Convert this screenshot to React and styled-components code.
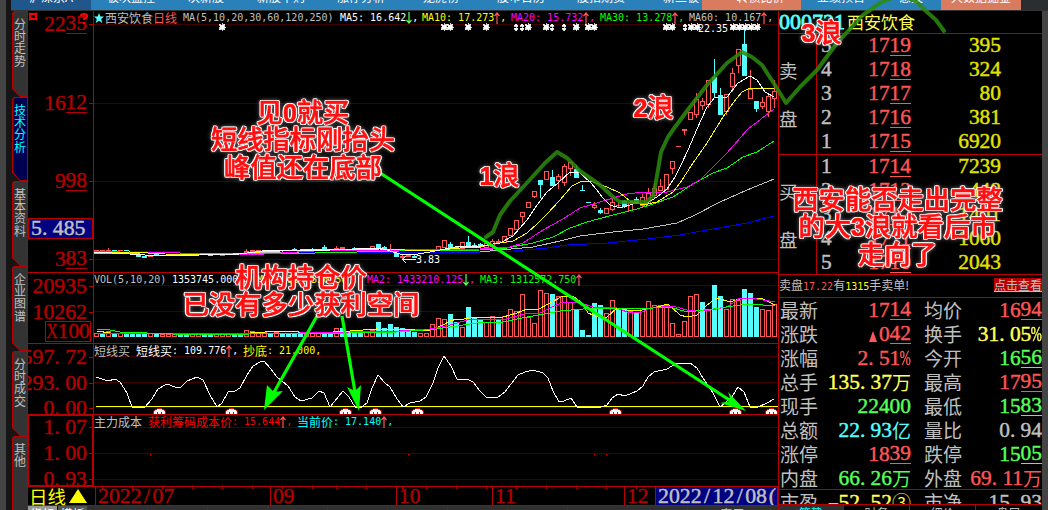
import React from 'react';
import styled, { createGlobalStyle } from 'styled-components';

const RED = '#b80000';
const UP = '#ff5555';
const DOWN = '#55ffff';
const GRID = '#420000';

const GlobalStyle = createGlobalStyle`
  * {
    box-sizing: border-box;
  }
  body {
    margin: 0;
    background: #000;
    overflow: hidden;
  }
`;

const Window = styled.div`
  position: relative;
  display: flex;
  width: 1048px;
  height: 510px;
  overflow: hidden;
  background: #000;
  color: #c0c0c0;
  font-family: 'Liberation Serif', 'Noto Sans CJK SC', serif;
`;

const Edge = styled.div`
  flex: none;
  width: ${(p) => p.$w}px;
  background: ${(p) => p.$bg};
`;

const Content = styled.div`
  display: flex;
  flex-direction: column;
  width: 1037px;
`;

const TopBar = styled.div`
  display: flex;
  height: 11px;
  overflow: hidden;
  background: #2b2d31;
  border-bottom: 1px solid #333;
`;

const TopTab = styled.div`
  flex: none;
  width: ${(p) => p.$w}px;
  padding-left: ${(p) => p.$pad || 0}px;
  height: 10px;
  background: ${(p) => p.$bg || '#2a80b9'};
  color: #fff;
  font: 12px 'Liberation Sans', 'Noto Sans CJK SC', sans-serif;
  line-height: 16px;
  text-align: center;
  white-space: nowrap;

  span {
    display: block;
    margin-top: -10px;
  }
`;

const Body = styled.div`
  display: flex;
  height: 499px;
`;

const Sidebar = styled.div`
  width: 17px;
  padding-left: 1px;
  background: #151515;
`;

const SideTab = styled.div`
  position: relative;
  height: ${(p) => p.$h}px;
  padding: 7px 0 0 2px;
  background: ${RED};
  clip-path: polygon(0 2px, 2px 0, 100% 0, 100% 100%, 8px 100%, 0 calc(100% - 8px));
  color: ${(p) => (p.$active ? '#00ffff' : '#c0c0c0')};
  font: 12px 'Noto Sans CJK SC', sans-serif;
  line-height: 12.2px;
  word-break: break-all;

  &::before {
    content: '';
    position: absolute;
    inset: 1px;
    background: ${(p) => (p.$active ? '#000050' : '#333')};
    clip-path: polygon(0 2px, 2px 0, 100% 0, 100% 100%, 7px 100%, 0 calc(100% - 8px));
  }

  span {
    position: relative;
    display: block;
    width: 12px;
  }
`;

const Main = styled.div`
  display: flex;
  flex-direction: column;
  width: 750px;
`;

const Panel = styled.div`
  display: flex;
  height: ${(p) => p.$h}px;
  border-bottom: 1px solid ${RED};
`;

const Axis = styled.div`
  position: relative;
  width: 66px;
  flex: none;
  overflow: hidden;
  border-right: 1px solid ${RED};
  box-shadow: ${(p) => (p.$boxed ? `inset 0 0 0 1px ${RED}` : 'none')};
`;

const AxisLabel = styled.div`
  display: flex;
  justify-content: flex-end;
  align-items: center;
  height: ${(p) => p.$h || 26}px;
  margin-top: ${(p) => p.$mt || 0}px;
  padding-right: 6px;
  color: #b40000;
  background: linear-gradient(${RED}, ${RED}) no-repeat right 0 top 50% / 4px 1px;
`;

const CursorValue = styled.div`
  display: flex;
  align-items: center;
  height: 21px;
  margin-top: 24px;
  padding-left: 2px;
  border: 1px solid ${RED};
  background: #000080;
  color: #c0c0c0;
`;

const Unit = styled.div`
  display: flex;
  align-items: center;
  width: 46px;
  height: 21px;
  margin: -4px 0 0 17px;
  padding-left: 1px;
  border: 1px solid ${RED};
  color: #b40000;
`;

const AxisIcons = styled.svg`
  position: absolute;
  left: 0;
  top: 0;
`;

const Plot = styled.div`
  position: relative;
  flex: 1;
  overflow: hidden;
`;

const PlotHeader = styled.div`
  position: absolute;
  top: 0;
  left: 0;
  display: flex;
  align-items: center;
  height: 13px;
  font: 10px 'DejaVu Sans Mono', 'Noto Sans CJK SC', monospace;
  line-height: 13px;
  white-space: pre;
`;

const Seg = styled.span`
  display: flex;
  align-items: center;
  flex: none;
  width: ${(p) => p.$w}px;
  color: ${(p) => p.$c || '#c0c0c0'};
`;

const Cn = styled.span`
  font: 12px 'Noto Sans CJK SC', sans-serif;
  line-height: 13px;
`;

const NumBox = styled.span`
  display: inline-flex;
  align-items: center;
  height: 20px;
  line-height: 19px;
  font-size: ${(p) => p.$size || 21.4}px;
  white-space: nowrap;
  -webkit-text-stroke: ${(p) => (p.$bold ? 0.8 : 0.45)}px currentColor;

  u {
    height: 20px;
    text-decoration: none;
    border-bottom: 1px solid currentColor;
  }
  b {
    font: 19px 'Noto Sans CJK SC', sans-serif;
    line-height: 18px;
    -webkit-text-stroke: 0;
  }
`;

const Cell = styled.i`
  display: flex;
  justify-content: ${(p) => (p.$ch === '.' ? 'flex-start' : 'center')};
  width: 0.5em;
  font-style: normal;
  line-height: 19px;
  transform: scaleX(${(p) => ({ '%': 0.62, X: 0.72, '-': 1.6 }[p.$ch] || 1)});
`;

const DateBar = styled.div`
  display: flex;
  height: 19px;
  border-bottom: 1px solid ${RED};
`;

const Period = styled.div`
  display: flex;
  align-items: center;
  width: 68px;
  padding-left: 1px;
  border-right: 1px solid ${RED};
  color: #ffff00;
  font: 18.5px 'Noto Sans CJK SC', sans-serif;
  line-height: 18px;
  white-space: nowrap;
`;

const Month = styled.div`
  display: flex;
  align-items: center;
  flex: none;
  width: ${(p) => p.$w}px;
  padding-left: 2px;
  border-right: 1px solid ${RED};
  overflow: hidden;
  color: ${(p) => (p.$on ? '#c0c0c0' : '#b40000')};
  background: ${(p) => (p.$on ? '#000080' : 'transparent')};
`;

const BottomTabs = styled.div`
  display: flex;
  height: 5px;
  overflow: hidden;
`;

const BottomTab = styled.div`
  flex: none;
  width: ${(p) => p.$w}px;
  border-right: 1px solid ${(p) => p.$line || RED};
  background: ${(p) => p.$bg || '#303030'};
  color: ${(p) => p.$c || '#c0c0c0'};
  font: 12px 'Noto Sans CJK SC', sans-serif;
  line-height: 14px;
  padding-top: 1px;
  text-align: center;
  white-space: nowrap;
`;

const Quotes = styled.div`
  display: flex;
  flex-direction: column;
  width: 264px;
  border-left: 1px solid ${RED};
`;

const QuoteTitle = styled.div`
  display: flex;
  align-items: center;
  height: 23px;
  border-bottom: 1px solid ${RED};
  color: #55ffff;

  strong {
    margin-left: 2px;
    color: #ffff55;
    font: 17px 'Noto Sans CJK SC', sans-serif;
    line-height: 20px;
  }
`;

const Book = styled.div`
  display: flex;
  height: ${(p) => p.$h}px;
  border-bottom: 1px solid ${RED};
`;

const Side = styled.div`
  width: 38px;
  border-right: 1px solid ${RED};
  font: 18.5px 'Noto Sans CJK SC', sans-serif;
  line-height: 24px;
  padding-top: 24px;

  div + div {
    margin-top: 24px;
  }
`;

const Levels = styled.div`
  flex: 1;
`;

const Level = styled.div`
  display: grid;
  grid-template-columns: 14px 76px 90px;
  align-items: center;
  height: 24px;
  padding-left: 4px;

  > span:nth-child(2) {
    justify-content: flex-end;
    color: ${UP};
  }
  > span:nth-child(3) {
    justify-content: flex-end;
    color: #e2e200;
  }
`;

const Notice = styled.div`
  display: flex;
  justify-content: space-between;
  align-items: flex-start;
  height: 24px;
  padding-top: 3px;
  border-bottom: 1px solid ${RED};
  font: 12px 'Noto Sans CJK SC', sans-serif;
  line-height: 14px;

  em {
    font: 10px 'DejaVu Sans Mono', monospace;
    color: ${UP};
  }
  em + em {
    color: #ffff00;
  }
  a {
    background: #b80000;
    text-decoration: underline;
    text-decoration-thickness: 1px;
  }
`;

const StatRow = styled.div`
  display: grid;
  grid-template-columns: 39px 92px 13px 39px 79px;
  align-items: center;
  height: 24px;
  padding-left: 1px;
  font: 19px 'Noto Sans CJK SC', sans-serif;
  line-height: 24px;
`;

const Stat = styled.div`
  display: flex;
  justify-content: flex-end;
  color: ${(p) => p.$c};
  font-family: 'Liberation Serif', 'Noto Sans CJK SC', serif;
`;

const Stats = styled.div`
  height: 192px;
  border-bottom: 1px solid ${RED};
`;

const LastStats = styled.div`
  height: 15px;
  overflow: hidden;
  border-bottom: 1px solid ${RED};
`;

const Marks = styled.svg`
  position: absolute;
  left: 0;
  top: 0;
  pointer-events: none;
`;

const Note = styled.div`
  position: absolute;
  left: ${(p) => p.$x}px;
  top: ${(p) => p.$y}px;
  transform: translateX(-50%);
  color: #ff1010;
  font: 500 26.3px 'Liberation Sans', 'Noto Sans CJK SC', sans-serif;
  line-height: 27.3px;
  text-align: center;
  white-space: nowrap;
  -webkit-text-stroke: 0.6px #ff1010;
  text-shadow: 1.3px 0 #fff, -1.3px 0 #fff, 0 1.3px #fff, 0 -1.3px #fff, 1px 1px #fff, -1px 1px #fff,
    1px -1px #fff, -1px -1px #fff;
  filter: drop-shadow(0 0 2px rgba(190, 190, 190, 0.55));

  b {
    font-weight: 700;
    font-size: 25px;
  }
`;

// every character that is not a digit takes one digit-wide cell
const cells = (text) =>
  text.split(/([^0-9])/).filter(Boolean).map((part, i) => {
    if (/^[0-9]+$/.test(part)) return <span key={i}>{part}</span>;
    if (/[万亿③]/.test(part)) return <b key={i}>{part}</b>;
    return <Cell key={i} $ch={part}>{part}</Cell>;
  });

const Num = ({ v, cents, size, bold }) => (
  <NumBox $size={size} $bold={bold}>
    {cents ? (
      <>
        {v[0] === '▲' && (
          <svg width="8" height="11" style={{ marginRight: 2, marginTop: 4 }}>
            <path d="M4 0L5.5 4L8 11H0L2.5 4Z" fill="currentColor" />
          </svg>
        )}
        <span>{v.replace('▲', '').slice(0, -2)}</span>
        <u>{v.slice(-2)}</u>
      </>
    ) : (
      cells(v)
    )}
  </NumBox>
);

const Arrow = ({ down }) => (
  <svg width="6" height="12" viewBox="0 0 6 12">
    <path
      d={down ? 'M3 0V11M0.5 8L3 11L5.5 8' : 'M3 12V1M0.5 4L3 1L5.5 4'}
      stroke={down ? '#55ff55' : UP}
      strokeWidth="1.2"
      fill="none"
    />
  </svg>
);

const barX = (i) => 94 + i * 6;

// [index, up, body top, body bottom, high, low]
const candles = [
  [0, 1, 250, 251, 250, 251], [1, 1, 250, 251, 250, 251], [2, 1, 250, 251, 248, 251],
  [3, 0, 250, 251, 250, 251], [4, 1, 250, 251, 250, 251], [5, 0, 250, 251, 250, 252],
  [6, 1, 252, 253, 252, 253], [7, 0, 254, 257, 254, 257], [8, 0, 256, 258, 256, 258],
  [9, 1, 255, 257, 255, 257], [10, 0, 254, 255, 254, 255], [12, 1, 254, 255, 254, 255],
  [14, 1, 255, 256, 254, 256], [17, 0, 254, 255, 254, 255], [19, 0, 254, 256, 254, 256],
  [21, 1, 254, 256, 253, 256], [23, 1, 254, 255, 254, 255], [25, 1, 251, 253, 249, 253],
  [26, 1, 250, 252, 250, 252], [27, 1, 250, 252, 250, 252], [29, 0, 250, 252, 250, 252],
  [31, 0, 250, 251, 250, 252], [33, 0, 249, 251, 248, 251], [35, 1, 249, 251, 249, 251],
  [36, 0, 249, 250, 248, 251], [38, 0, 247, 249, 245, 250], [40, 1, 248, 250, 246, 250],
  [41, 1, 247, 249, 247, 249], [43, 0, 248, 250, 247, 250], [45, 0, 249, 251, 249, 251],
  [46, 1, 246, 250, 246, 250], [47, 0, 244, 248, 244, 248], [48, 0, 247, 249, 246, 249],
  [49, 1, 249, 250, 244, 251], [50, 0, 253, 257, 253, 257], [51, 1, 256, 258, 255, 259],
  [52, 1, 255, 257, 254, 257], [53, 0, 256, 258, 255, 258], [56, 1, 250, 252, 250, 252],
  [57, 1, 246, 250, 246, 250], [58, 1, 240, 248, 240, 248], [59, 0, 244, 249, 242, 249],
  [60, 0, 247, 249, 246, 249], [61, 1, 242, 249, 242, 249], [62, 0, 242, 247, 236, 247],
  [63, 0, 245, 247, 243, 247], [64, 0, 244, 247, 243, 248], [65, 1, 243, 248, 243, 248],
  [66, 1, 241, 247, 239, 247], [67, 1, 241, 243, 239, 243], [68, 1, 236, 243, 236, 243],
  [69, 1, 228, 236, 228, 236], [70, 1, 220, 230, 220, 230], [71, 1, 212, 217, 212, 223],
  [72, 1, 202, 208, 202, 208], [73, 1, 191, 197, 191, 198], [74, 0, 180, 185, 180, 198],
  [75, 1, 171, 180, 171, 180], [76, 0, 177, 186, 170, 186], [77, 1, 176, 181, 174, 189],
  [78, 1, 166, 183, 164, 186], [79, 1, 162, 169, 162, 176], [80, 0, 169, 178, 165, 178],
  [81, 0, 190, 191, 185, 191], [82, 0, 202, 203, 202, 203], [83, 1, 205, 208, 202, 209],
  [84, 0, 210, 213, 208, 214], [85, 1, 208, 214, 208, 214], [86, 1, 202, 210, 198, 211],
  [87, 1, 205, 206, 203, 208], [88, 0, 201, 207, 200, 208], [89, 1, 202, 211, 202, 211],
  [90, 0, 199, 204, 197, 204], [91, 1, 197, 206, 194, 207], [92, 1, 193, 204, 188, 204],
  [93, 1, 188, 196, 183, 198], [94, 1, 186, 191, 179, 191], [95, 1, 174, 190, 174, 190],
  [96, 1, 161, 169, 161, 174], [97, 1, 146, 147, 146, 147], [98, 1, 129, 131, 129, 135],
  [99, 1, 112, 120, 112, 120], [100, 1, 99, 115, 93, 118], [101, 1, 101, 106, 98, 110],
  [102, 1, 80, 105, 80, 108], [103, 0, 77, 93, 59, 97], [104, 0, 95, 115, 88, 115],
  [105, 1, 94, 112, 94, 115], [106, 1, 73, 87, 68, 92], [107, 1, 49, 66, 49, 73],
  [108, 0, 44, 76, 28, 76], [109, 1, 89, 99, 70, 99], [110, 0, 101, 109, 101, 112],
  [111, 1, 102, 107, 97, 109], [112, 1, 96, 112, 93, 117], [113, 1, 91, 99, 80, 108],
];

const volumes = [
  4, 4, 6, 4, 4, 4, 4, 4, 4, 4, 4, 3, 3, 3, 4, 3, 3, 3, 3, 4, 3, 3, 4, 4, 4, 7, 6, 5, 5, 4, 5, 4, 4, 4,
  5, 4, 5, 4, 3, 5, 9, 9, 5, 5, 4, 5, 7, 15, 9, 13, 10, 9, 6, 5, 4, 4, 13, 19, 18, 23, 15, 10, 30, 20,
  18, 15, 21, 18, 21, 28, 26, 43, 20, 14, 47, 44, 43, 41, 41, 35, 27, 7, 2, 34, 32, 24, 37, 29, 27, 26,
  25, 29, 36, 32, 32, 32, 14, 3, 16, 41, 43, 35, 27, 52, 41, 28, 38, 37, 48, 44, 30, 28, 27, 33,
];

const fallingVolumes = new Set([
  1, 3, 5, 6, 7, 8, 10, 14, 15, 18, 19, 23, 24, 29, 31, 32, 33, 34, 38, 39, 41, 42, 43, 44, 47, 48, 49,
  50, 51, 52, 53, 59, 60, 62, 63, 64, 67, 76, 80, 81, 82, 83, 84, 87, 88, 90, 101, 103, 104, 108, 109, 110,
]);

const priceLines = [
  ['#0000ff', '94,251 180,252 300,252 400,252 480,252 513,251 547,248 567,245 607,243 647,239 680,235 713,229 747,223 774,216'],
  ['#c0c0c0', '94,253 140,254 200,254 300,252 480,252 500,250 533,247 560,241 580,236 613,232 643,229 677,223 693,216 720,202 747,190 774,179'],
  ['#00ff00', '180,253 315,253 400,251 480,250 507,248 533,243 553,237 570,228 587,222 613,215 637,209 653,204 673,197 693,184 713,173 727,168 743,157 757,152 774,141'],
  ['#ff00ff', '94,251 120,252 160,252 220,255 265,254 330,250 400,250 480,249 510,247 523,243 543,230 563,219 580,208 597,203 613,198 627,194 643,192 667,192 687,187 700,180 713,167 727,153 748,129 774,109'],
  ['#ffff00', '94,253 130,252 165,254 220,255 260,252 300,250 380,249 430,251 460,248 480,247 493,244 513,241 527,233 537,224 547,214 560,200 572,186 582,181 593,182 607,187 620,193 630,201 643,205 657,202 673,192 680,183 693,163 707,143 723,117 733,103 742,92 750,88 762,88 774,89'],
  ['#ffffff', '94,252 130,254 160,256 200,255 240,254 270,250 330,250 380,248 400,254 412,255 430,252 455,247 480,246 500,243 513,236 527,220 535,208 547,192 558,183 570,172 580,173 590,182 597,190 603,198 610,205 620,208 633,204 647,203 657,197 667,189 675,177 682,163 688,150 697,129 707,107 715,97 727,97 738,83 750,76 757,80 765,92 774,97'],
];

const volumeLines = [
  ['#ffff00', '97,331 110,333 160,333 200,335 240,333 250,333 280,331 317,333 350,331 376,329 417,330 430,330 443,325 450,321 457,319 464,319 477,317 490,318 503,317 517,313 527,309 537,310 550,303 563,296 573,296 582,303 588,313 598,317 607,317 617,308 627,310 637,311 657,307 668,304 680,315 687,317 697,315 707,305 717,298 730,302 743,298 763,299 775,305'],
  ['#ff00ff', '97,333 140,333 200,334 300,333 400,331 430,329 450,325 467,320 483,319 503,320 517,316 527,313 540,313 550,308 563,302 577,302 593,307 617,308 627,312 640,313 650,308 673,306 690,311 710,310 727,307 740,298 757,299 775,302'],
  ['#00ff00', '97,329 110,330 120,332 200,335 250,334 350,333 397,332 437,329 450,327 477,323 503,322 527,317 550,313 560,311 583,309 617,308 653,308 670,307 687,312 713,309 733,306 750,304 775,306'],
];

const shortLine =
  '96,377 108,381 115,379 120,382 127,393 132,407 145,407 152,399 158,389 167,384 175,387 181,387 187,381 197,377 203,380 210,395 217,407 222,403 228,392 235,391 240,388 247,375 253,366 260,362 264,361 270,368 277,377 288,386 295,397 301,401 312,398 319,391 324,393 330,407 343,391 349,397 355,407 360,408 367,403 372,388 378,375 385,383 390,387 397,399 403,407 410,403 420,401 426,397 433,383 438,368 444,356 451,366 457,379 467,379 473,382 480,391 487,398 498,397 505,392 511,384 518,375 525,372 533,370 543,373 548,378 553,391 559,402 564,401 571,398 577,407 601,407 607,405 612,398 618,394 625,396 637,391 643,386 648,377 654,372 667,369 677,363 690,363 697,368 703,378 713,393 720,407 732,397 738,387 744,392 750,407 758,407 767,403 774,399';

const starMarks = [222, 444, 450, 468, 486, 528, 546, 576, 588, 594, 666, 672, 691, 697, 733, 739, 745, 751, 757];
const diamondMarks = [516, 522, 552, 564, 685];
const signals = [159, 231, 345, 375, 417, 615, 735, 771];

const Grid = ({ ys }) => ys.map((y) => <path key={y} d={`M93 ${y + 0.5}H778`} stroke={GRID} />);

const Lines = ({ data }) =>
  data.map(([color, points]) => (
    <polyline key={color} points={points} stroke={color} fill="none" shapeRendering="crispEdges" />
  ));

const PriceChart = () => (
  <svg width="684" height="261" viewBox="94 11 684 261" shapeRendering="crispEdges">
    <Grid ys={[24, 103, 181, 259]} />
    {candles.map(([i, up, top, bottom, high, low]) => {
      const x = barX(i);
      const color = up ? UP : DOWN;
      return (
        <g key={i} stroke={color}>
          <path d={`M${x + 2.5} ${high}V${low}`} />
          {bottom - top < 2 ? (
            <path d={`M${x} ${top + 0.5}h5`} />
          ) : (
            <rect x={x + 0.5} y={top + 0.5} width="4" height={bottom - top - 1} fill={up ? '#000' : color} />
          )}
        </g>
      );
    })}
    <Lines data={priceLines} />
    {starMarks.map((x) => (
      <path
        key={x}
        d={`M${x - 3} 24l2 1h2l2 -1l-1 2v2l1 2l-2 -1h-2l-2 1l1 -2v-2zM${x} 23v8M${x - 3.5} 27h7`}
        fill="#fff"
        stroke="#fff"
        strokeWidth="0.8"
      />
    ))}
    {diamondMarks.map((x) => (
      <path key={x} d={`M${x} 23.5l2 2.5h-4zM${x} 31l2 -3h-4zM${x} 24v7`} fill="#fff" stroke="#fff" strokeWidth="0.8" />
    ))}
    <path d="M403 259.5H416M406 256L403 259.5L406 263" stroke="#fff" fill="none" />
    <g fill="#fff" fontSize="10" fontFamily="'DejaVu Sans Mono', monospace">
      <text x="416" y="263">3.83</text>
      <text x="698" y="32">22.35</text>
    </g>
  </svg>
);

const VolumeChart = () => (
  <svg width="684" height="70" viewBox="94 273 684 70" shapeRendering="crispEdges">
    <Grid ys={[285, 311]} />
    {volumes.map((h, i) =>
      fallingVolumes.has(i) ? (
        <rect key={i} x={barX(i)} y={337 - h} width="5" height={h} fill={DOWN} />
      ) : (
        <rect key={i} x={barX(i) + 0.5} y={337.5 - h} width="4" height={h - 1} fill="#000" stroke={UP} />
      )
    )}
    <Lines data={volumeLines} />
  </svg>
);

const ShortChart = () => (
  <svg width="684" height="70" viewBox="94 344 684 70" shapeRendering="crispEdges">
    <Grid ys={[356, 382, 407]} />
    <path d="M96 406.5H778" stroke="#ffff00" />
    <polyline points={shortLine} stroke="#fff" fill="none" />
    {signals.map((x) => (
      <g key={x}>
        <path d={`M${x - 6} 414a6.5 5.5 0 0 1 13 0z`} fill="#fff" stroke="#e00000" />
        <path d={`M${x - 1.5} 414v-2M${x + 2.5} 414v-2`} stroke="#e00000" />
      </g>
    ))}
  </svg>
);

const CostChart = () => (
  <svg width="684" height="71" viewBox="94 415 684 71" shapeRendering="crispEdges">
    <Grid ys={[427, 453, 479]} />
    {[150, 408, 594, 606].map((x) => (
      <rect key={x} x={x} y="454" width="1" height="1" fill="#f00" />
    ))}
  </svg>
);

const ticks = [102, 132, 162, 192, 222, 252, 282, 312, 336, 366, 402, 426, 456, 486, 516, 546, 576, 606, 636];

const DateTicks = styled.svg`
  position: absolute;
  left: 28px;
  top: 486px;
`;

const topTabs = [
  ['沪深京A', 80, '#1f568c'], ['板块监控', 80], ['次新股', 70], ['新股申购', 80], ['涨停分析', 80],
  ['龙虎榜', 80], ['股市日历', 80], ['股指期货', 80], ['新三板', 61, null, 19], ['转债比价', 99, '#d97b5e', 18],
  ['业绩预告', 80, null, -1], ['慧投', 60], ['大数据掘金', 80, '#d97b5e'],
];

const sideTabs = [
  ['分时走势', 86], ['技术分析', 84], ['基本资料', 85], ['企业图谱', 85], ['分时成交', 85], ['其他', 90],
];

const asks = [['5', '1719', '395'], ['4', '1718', '324'], ['3', '1717', '80'], ['2', '1716', '381'], ['1', '1715', '6920']];
const bids = [['1', '1714', '7239'], ['2', '1713', '448'], ['3', '1712', '1401'], ['4', '1711', '1060'], ['5', '1710', '2043']];

const GREEN = '#55ff55';
const YELLOW = '#ffff55';

const stats = [
  ['最新', '1714', UP, 1, '均价', '1694', UP, 1],
  ['涨跌', '▲042', UP, 1, '换手', '31.05%', YELLOW, 0],
  ['涨幅', '2.51%', UP, 0, '今开', '1656', GREEN, 1],
  ['总手', '135.37万', YELLOW, 0, '最高', '1795', UP, 1],
  ['现手', '22400', GREEN, 0, '最低', '1583', GREEN, 1],
  ['总额', '22.93亿', DOWN, 0, '量比', '0.94', '#c0c0c0', 0],
  ['涨停', '1839', UP, 1, '跌停', '1505', GREEN, 1],
  ['内盘', '66.26万', GREEN, 0, '外盘', '69.11万', UP, 0],
];

const StatLine = ({ row }) => (
  <StatRow>
    <span>{row[0]}</span>
    <Stat $c={row[2]}><Num v={row[1]} cents={row[3]} /></Stat>
    <span />
    <span>{row[4]}</span>
    <Stat $c={row[6]}><Num v={row[5]} cents={row[7]} /></Stat>
  </StatRow>
);

const BookSide = ({ names, rows, h }) => (
  <Book $h={h}>
    <Side>
      {names.map((n) => <div key={n}>{n}</div>)}
    </Side>
    <Levels>
      {rows.map(([n, price, qty]) => (
        <Level key={n}>
          <Num v={n} />
          <Num v={price} cents />
          <Num v={qty} />
        </Level>
      ))}
    </Levels>
  </Book>
);

const App = () => {
  return (
    <>
      <GlobalStyle />
      <Window>
        <Edge $w={6} $bg="#444" />
        <Edge $w={5} $bg="#151515" />
        <Content>
          <TopBar>
            {topTabs.map(([name, w, bg, pad]) => (
              <TopTab key={name} $w={w} $bg={bg} $pad={pad}><span>{name}</span></TopTab>
            ))}
          </TopBar>
          <Body>
            <Sidebar>
              {sideTabs.map(([name, h], i) => (
                <SideTab key={name} $h={h} $active={i === 1}><span>{name}</span></SideTab>
              ))}
            </Sidebar>
            <Main>
              <Panel $h={262}>
                <Axis>
                  <AxisIcons width="65" height="14">
                    <path d="M2 3h6v5h-6zM1 2l1 1M9 2l-1 1M1 9l1 -1M9 9l-1 -1" fill="none" stroke="#f00" strokeWidth="1.8" />
                    <path d="M53 5q0 -2 3 -2t3 2t-3 3v1M56 11v2" fill="none" stroke="#f00" strokeWidth="2.2" />
                  </AxisIcons>
                  <AxisLabel><Num v="2235" cents /></AxisLabel>
                  <AxisLabel $mt={53}><Num v="1612" cents /></AxisLabel>
                  <AxisLabel $mt={52}><Num v="998" cents /></AxisLabel>
                  <CursorValue><Num v="5.485" size={21.8} /></CursorValue>
                  <AxisLabel $h={24} $mt={8}><Num v="383" cents /></AxisLabel>
                </Axis>
                <Plot>
                  <PriceChart />
                  <PlotHeader>
                    <Seg $w={11} $c={DOWN}>
                      <svg width="10" height="10" viewBox="0 0 10 10">
                        <path d="M5 0L6.4 3.5H10L7.2 6L8.2 10L5 7.7L1.8 10L2.8 6L0 3.5H3.6Z" fill="currentColor" />
                      </svg>
                    </Seg>
                    <Seg $w={48}><Cn>西安饮食</Cn></Seg>
                    <Seg $w={30} $c={UP}><Cn>日线</Cn></Seg>
                    <Seg $w={157}>MA(5,10,20,30,60,120,250)</Seg>
                    <Seg $w={82} $c="#fff">MA5: 16.642<Arrow down />,</Seg>
                    <Seg $w={89} $c="#ffff00">MA10: 17.273<Arrow />,</Seg>
                    <Seg $w={89} $c="#ff00ff">MA20: 15.732<Arrow />,</Seg>
                    <Seg $w={89} $c="#00ff00">MA30: 13.278<Arrow />,</Seg>
                    <Seg $w={88}>MA60: 10.167<Arrow />,</Seg>
                  </PlotHeader>
                </Plot>
              </Panel>
              <Panel $h={71}>
                <Axis>
                  <AxisLabel><Num v="20935" size={21.8} /></AxisLabel>
                  <AxisLabel><Num v="10262" size={21.8} /></AxisLabel>
                  <Unit><Num v="X100" /></Unit>
                </Axis>
                <Plot>
                  <VolumeChart />
                  <PlotHeader>
                    <Seg $w={78}>VOL(5,10,20)</Seg>
                    <Seg $w={85} $c="#fff">1353745.000</Seg>
                    <Seg $w={110} $c="#ffff00">MA1: 1361520.50</Seg>
                    <Seg $w={113} $c="#ff00ff">MA2: 1433210.125<Arrow down />,</Seg>
                    <Seg $w={113} $c="#00ff00">MA3: 1312572.750<Arrow /></Seg>
                  </PlotHeader>
                </Plot>
              </Panel>
              <Panel $h={71}>
                <Axis>
                  <AxisLabel><Num v="597.72" size={21.8} /></AxisLabel>
                  <AxisLabel><Num v="293.00" size={21.8} /></AxisLabel>
                  <AxisLabel $h={25}><Num v="0.00" size={21.8} /></AxisLabel>
                </Axis>
                <Plot>
                  <ShortChart />
                  <PlotHeader>
                    <Seg $w={42}><Cn>短线买</Cn></Seg>
                    <Seg $w={107} $c="#fff"><Cn>短线买</Cn>: 109.776<Arrow />,</Seg>
                    <Seg $w={90} $c="#ffff00"><Cn>抄底</Cn>: 21.000,</Seg>
                  </PlotHeader>
                </Plot>
              </Panel>
              <Panel $h={72}>
                <Axis $boxed>
                  <AxisLabel $h={25}><Num v="1.07" size={21.8} /></AxisLabel>
                  <AxisLabel><Num v="1.00" size={21.8} /></AxisLabel>
                  <AxisLabel><Num v="0.93" size={21.8} /></AxisLabel>
                </Axis>
                <Plot>
                  <CostChart />
                  <PlotHeader>
                    <Seg $w={54}><Cn>主力成本</Cn></Seg>
                    <Seg $w={149} $c="#f00"><Cn>获利筹码成本价</Cn>: 15.644<Arrow />,</Seg>
                    <Seg $w={100} $c="#00ffff"><Cn>当前价</Cn>: 17.140<Arrow />,</Seg>
                  </PlotHeader>
                </Plot>
              </Panel>
              <DateBar>
                <Period>
                  日线
                  <svg width="18" height="16" style={{ marginLeft: 3 }}>
                    <path d="M9 1L18 15H0Z" fill="currentColor" />
                  </svg>
                </Period>
                <Month $w={175}><Num v="2022/07" size={21.8} /></Month>
                <Month $w={126}><Num v="09" /></Month>
                <Month $w={96}><Num v="10" /></Month>
                <Month $w={132}><Num v="11" /></Month>
                <Month $w={31}><Num v="12" /></Month>
                <Month $w={122} $on><Num v="2022/12/08(" size={21.8} /></Month>
              </DateBar>
              <BottomTabs>
                <BottomTab $w={30} $bg="#999" $c="#fff" $line="#111">指标</BottomTab>
                <BottomTab $w={30} $bg="#555" $c="#fff">模板</BottomTab>
                {Array.from({ length: 10 }, (_, i) => <BottomTab key={i} $w={60} />)}
                <BottomTab $w={90} $line="transparent">窗口</BottomTab>
              </BottomTabs>
            </Main>
            <Quotes>
              <QuoteTitle>
                <Num v="000721" size={22} bold />
                <strong>西安饮食</strong>
              </QuoteTitle>
              <BookSide names={['卖', '盘']} rows={asks} h={121} />
              <BookSide names={['买', '盘']} rows={bids} h={120} />
              <Notice>
                <span>卖盘<em>17.22</em>有<em>1315</em>手卖单!</span>
                <a>点击查看</a>
              </Notice>
              <Stats>
                {stats.map((row) => <StatLine key={row[0]} row={row} />)}
              </Stats>
              <LastStats>
                <StatLine row={['市盈', '-52.52③', YELLOW, 0, '市净', '15.93', '#c0c0c0', 0]} />
              </LastStats>
              <BottomTabs>
                <BottomTab $w={65} $c="#00ffff">笔势</BottomTab>
                <BottomTab $w={66} $bg="#000">财务</BottomTab>
                <BottomTab $w={66} $bg="#000">细价</BottomTab>
                <BottomTab $w={66} $bg="#000" $line="transparent">盘口</BottomTab>
              </BottomTabs>
            </Quotes>
            <Edge $w={6} $bg="#444" />
          </Body>
        </Content>

        <DateTicks width="750" height="4" viewBox="28 486 750 4">
          {ticks.map((x) => <path key={x} d={`M${x + 0.5} 486v3`} stroke={RED} />)}
        </DateTicks>
        <Marks width="1048" height="510">
          <g fill="none" stroke="#2c8c0c" strokeWidth="4" strokeLinejoin="round" strokeLinecap="round" opacity="0.85">
            <polyline points="486,237 493,232 500,215 510,201 525,185 545,163 557,152 567,158 580,171 600,185 612,196 620,202 646,202 653,196 655,187 658,170 661,152 668,137 675,127 690,107 707,85 727,63 742,52 752,57 762,65 773,82 786,103 800,87 817,70 837,43 863,15 880,3 892,-2 908,-2 917,2 927,12 936,20 944,31" />
          </g>
          <g stroke="#00ff00" strokeWidth="3.2" fill="#00ff00">
            <path d="M374 169L734 403" />
            <path d="M317 316L273 394" />
            <path d="M342 316L355 392" />
          </g>
          <g fill="#00ff00">
            <path d="M746 411L728 392L731 401L720 403Z" />
            <path d="M264 410L267 385L274 392L283 391Z" />
            <path d="M359 411L347 387L355 391L361 385Z" />
          </g>
        </Marks>
        <Note $x={303} $y={100}>见<b>0</b>就买<br />短线指标刚抬头<br />峰值还在底部</Note>
        <Note $x={301} $y={265}>机构持仓价<br />已没有多少获利空间</Note>
        <Note $x={897.5} $y={187}>西安能否走出完整<br />的大<b>3</b>浪就看后市<br />走向了</Note>
        <Note $x={499.5} $y={163}><b>1</b>浪</Note>
        <Note $x={653.5} $y={95}><b>2</b>浪</Note>
        <Note $x={821.5} $y={20}><b>3</b>浪</Note>
      </Window>
    </>
  );
};

export default App;
